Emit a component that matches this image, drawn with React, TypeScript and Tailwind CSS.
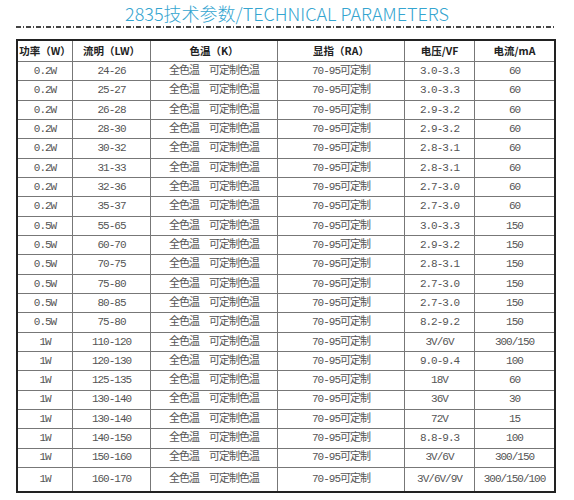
import React from "react";

const rows: string[][] = [
  ["0.2W", "24-26", "3.0-3.3", "60"],
  ["0.2W", "25-27", "3.0-3.3", "60"],
  ["0.2W", "26-28", "2.9-3.2", "60"],
  ["0.2W", "28-30", "2.9-3.2", "60"],
  ["0.2W", "30-32", "2.8-3.1", "60"],
  ["0.2W", "31-33", "2.8-3.1", "60"],
  ["0.2W", "32-36", "2.7-3.0", "60"],
  ["0.2W", "35-37", "2.7-3.0", "60"],
  ["0.5W", "55-65", "3.0-3.3", "150"],
  ["0.5W", "60-70", "2.9-3.2", "150"],
  ["0.5W", "70-75", "2.8-3.1", "150"],
  ["0.5W", "75-80", "2.7-3.0", "150"],
  ["0.5W", "80-85", "2.7-3.0", "150"],
  ["0.5W", "75-80", "8.2-9.2", "150"],
  ["1W", "110-120", "3V/6V", "300/150"],
  ["1W", "120-130", "9.0-9.4", "100"],
  ["1W", "125-135", "18V", "60"],
  ["1W", "130-140", "36V", "30"],
  ["1W", "130-140", "72V", "15"],
  ["1W", "140-150", "8.8-9.3", "100"],
  ["1W", "150-160", "3V/6V", "300/150"],
  ["1W", "160-170", "3V/6V/9V", "300/150/100"],
];

const cols = "grid grid-cols-[55px_78px_127px_127px_70px_79px]";
const cell = "flex items-center justify-center border-r border-[#777] last:border-r-0";
const body =
  "font-['Liberation_Mono','Noto_Sans_CJK_SC',monospace] text-[11px] tracking-[-1px] text-[#555]";

export default function App() {
  return (
    <div className="w-[574px] h-[500px] bg-white relative overflow-hidden">
      <div className="pt-[2px] h-[26px] text-center font-['Noto_Sans_CJK_SC','Noto_Sans',sans-serif] font-light text-[18px] leading-[22px] text-[#35a5d0]">
        2835技术参数/TECHNICAL PARAMETERS
      </div>
      <div className="ml-[16px] w-[540px] h-[2px] bg-[repeating-linear-gradient(90deg,#444_0_5px,transparent_5px_7px,#444_7px_8px,transparent_8px_10px)]" />
      <div className="ml-[16px] mt-[11px] w-[540px] border-2 border-[#222]">
        <div
          className={`${cols} h-[21px] border-b border-[#777] font-['Noto_Sans_CJK_SC',sans-serif] font-bold text-[10.5px] text-[#222]`}
        >
          <div className={cell}>功率（W）</div>
          <div className={cell}>流明（LW）</div>
          <div className={cell}>色温（K）</div>
          <div className={cell}>显指（RA）</div>
          <div className={cell}>电压/VF</div>
          <div className={cell}>电流/mA</div>
        </div>
        {rows.map((r, i) => {
          const last = i === rows.length - 1;
          return (
            <div
              key={i}
              className={`${cols} ${body} ${last ? "h-[22.7px]" : "h-[19.33px] border-b border-[#777]"}`}
            >
              <div className={cell}>{r[0]}</div>
              <div className={cell}>{r[1]}</div>
              <div className={cell}>全色温　可定制色温</div>
              <div className={cell}>70-95可定制</div>
              <div className={cell}>{r[2]}</div>
              <div className={cell}>{r[3]}</div>
            </div>
          );
        })}
      </div>
    </div>
  );
}
